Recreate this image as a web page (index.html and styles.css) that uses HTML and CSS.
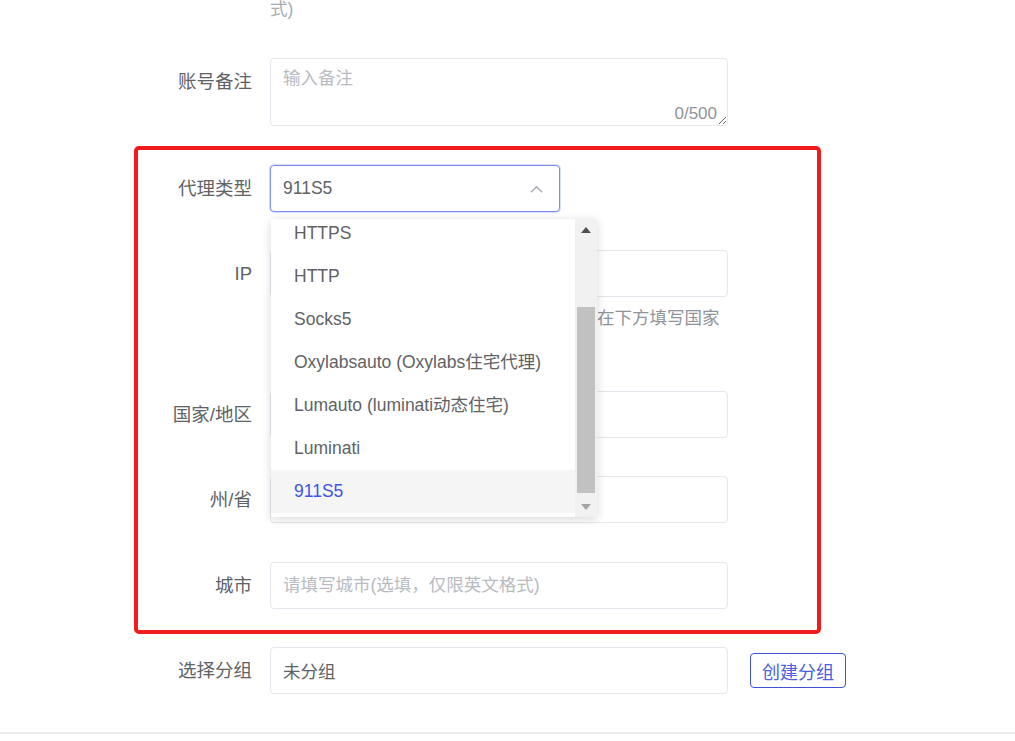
FILE: index.html
```html
<!DOCTYPE html>
<html lang="zh-CN">
<head>
    <meta charset="UTF-8">
    <meta name="viewport" content="width=device-width, initial-scale=1.0">
    <title>账号代理设置</title>
    <link rel="stylesheet" href="styles.css">
</head>
<body>
    <div class="page">
        <div class="hint-tail">式)</div>

        <div class="form-item row-remark">
            <label class="form-label">账号备注</label>
            <div class="form-content textarea-wrap">
                <textarea class="form-textarea" placeholder="输入备注"></textarea>
                <span class="textarea-count">0/500</span>
            </div>
        </div>

        <div class="form-item">
            <label class="form-label">代理类型</label>
            <div class="form-content select-wrap">
                <div class="form-select">
                    <span>911S5</span>
                    <svg class="select-arrow" viewBox="0 0 14 8" fill="none" stroke="currentColor">
                        <polyline points="1.5,7 7,1.5 12.5,7" stroke-width="1.6" stroke-linecap="round" stroke-linejoin="round" />
                    </svg>
                </div>

                <div class="dropdown">
                    <ul class="dropdown-list">
                        <li>HTTPS</li>
                        <li>HTTP</li>
                        <li>Socks5</li>
                        <li>Oxylabsauto (Oxylabs住宅代理)</li>
                        <li>Lumauto (luminati动态住宅)</li>
                        <li>Luminati</li>
                        <li class="selected">911S5</li>
                    </ul>
                    <div class="scrollbar">
                        <div class="scroll-btn"><span class="tri-up"></span></div>
                        <div class="scroll-track"><div class="scroll-thumb"></div></div>
                        <div class="scroll-btn"><span class="tri-down"></span></div>
                    </div>
                </div>
            </div>
        </div>

        <div class="form-item">
            <label class="form-label">IP</label>
            <div class="form-content">
                <input class="form-input" type="text">
                <div class="form-hint">
                    <div class="hint-line">在下方填写国家</div>
                </div>
            </div>
        </div>

        <div class="form-item">
            <label class="form-label">国家/地区</label>
            <div class="form-content">
                <input class="form-input" type="text">
            </div>
        </div>

        <div class="form-item row-state">
            <label class="form-label">州/省</label>
            <div class="form-content">
                <input class="form-input" type="text">
            </div>
        </div>

        <div class="form-item">
            <label class="form-label">城市</label>
            <div class="form-content">
                <input class="form-input" type="text" placeholder="请填写城市(选填，仅限英文格式)">
            </div>
        </div>

        <div class="form-item row-group">
            <label class="form-label">选择分组</label>
            <div class="form-content">
                <input class="form-input" type="text" value="未分组" readonly>
            </div>
            <button class="btn-outline">创建分组</button>
        </div>

        <div class="footer-line"></div>

        <div class="highlight-box"></div>
    </div>
</body>
</html>
```

FILE: styles.css
```css
* {
    margin: 0;
    padding: 0;
    box-sizing: border-box;
}

body {
    font-family: "Liberation Sans", "Noto Sans CJK SC", sans-serif;
    background-color: #fff;
    color: #606266;
    overflow: hidden;
}

.page {
    position: relative;
    height: 741px;
}

.hint-tail {
    padding-left: 270px;
    height: 18px;
    line-height: 18px;
    font-size: 17.5px;
    color: #a8abb2;
}

.form-item {
    display: flex;
    align-items: flex-start;
    margin-bottom: 38px;
}

.row-remark {
    margin-top: 40px;
    margin-bottom: 39px;
}

.row-state {
    margin-bottom: 39px;
}

.form-label {
    flex: none;
    width: 252px;
    margin-right: 18px;
    text-align: right;
    line-height: 47px;
    font-size: 18.5px;
    color: #606266;
}

.form-content {
    flex: none;
    width: 458px;
}

.form-input,
.form-textarea,
.form-select {
    display: block;
    width: 100%;
    border: 1px solid #e4e7ed;
    border-radius: 4px;
    background: #fff;
    font-family: inherit;
    font-size: 17.5px;
    color: #606266;
    outline: none;
}

.form-input {
    height: 47px;
    padding: 0 12px;
}

.form-input::placeholder,
.form-textarea::placeholder {
    color: #b8bbc2;
}

.textarea-wrap {
    position: relative;
}

.form-textarea {
    height: 68px;
    padding: 6px 12px;
    line-height: 26px;
    resize: vertical;
}

.textarea-count {
    position: absolute;
    right: 11px;
    bottom: 1px;
    line-height: 22px;
    font-size: 17px;
    color: #909399;
    background: #fff;
}

.select-wrap {
    position: relative;
}

.form-select {
    width: 290px;
    height: 47px;
    display: flex;
    align-items: center;
    justify-content: space-between;
    padding: 0 16px 0 12px;
    border-color: #7d8df0;
    box-shadow: 0 0 0 1px rgba(125, 141, 240, 0.3);
}

.select-arrow {
    width: 13px;
    height: 8px;
    color: #a8abb2;
}

.dropdown {
    position: absolute;
    top: 54px;
    left: 1px;
    width: 326px;
    height: 298px;
    display: flex;
    background: #fff;
    border-radius: 2px;
    box-shadow: 0 2px 10px rgba(0, 0, 0, 0.16);
    overflow: hidden;
    z-index: 5;
}

.dropdown-list {
    flex: 1;
    list-style: none;
    margin-top: -7px;
}

.dropdown-list li {
    height: 43px;
    line-height: 43px;
    padding-left: 23px;
    font-size: 17.5px;
    color: #606266;
    white-space: nowrap;
}

.dropdown-list li.selected {
    background-color: #f5f5f5;
    color: #4055e3;
}

.scrollbar {
    flex: none;
    width: 22px;
    display: flex;
    flex-direction: column;
    background: #f1f1f1;
}

.scroll-btn {
    height: 21px;
    display: flex;
    align-items: center;
    justify-content: center;
}

.tri-up {
    border-left: 5px solid transparent;
    border-right: 5px solid transparent;
    border-bottom: 6px solid #505050;
}

.tri-down {
    border-left: 5px solid transparent;
    border-right: 5px solid transparent;
    border-top: 6px solid #a3a3a3;
}

.scroll-track {
    flex: 1;
    padding: 67px 2px 0;
}

.scroll-thumb {
    height: 186px;
    background: #c1c1c1;
}

.form-hint {
    height: 56px;
    padding: 10px 0 0 327px;
    font-size: 17.5px;
    line-height: 22px;
    color: #909399;
}

.hint-line {
    white-space: nowrap;
}

.row-group {
    align-items: center;
}

.btn-outline {
    flex: none;
    width: 96px;
    height: 35px;
    margin-left: 22px;
    border: 1px solid #3f51d8;
    border-radius: 4px;
    background: #fff;
    font-family: inherit;
    font-size: 18px;
    color: #4b5de0;
}

.footer-line {
    margin-top: 37px;
    border-top: 2px solid #ececec;
}

.highlight-box {
    position: absolute;
    left: 134px;
    top: 146px;
    width: 687px;
    height: 488px;
    border: 4px solid #f11b1b;
    border-radius: 5px;
    pointer-events: none;
}
```
